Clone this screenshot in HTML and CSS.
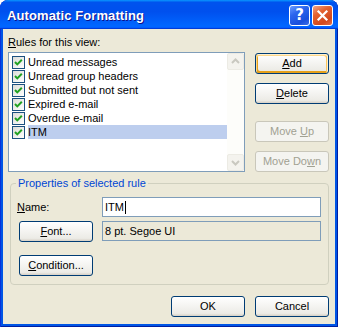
FILE: index.html
```html
<!DOCTYPE html>
<html>
<head>
<meta charset="utf-8">
<title>Automatic Formatting</title>
<link rel="stylesheet" href="styles.css">
</head>
<body>
<div class="window">
  <div class="titlebar">
    <span class="title">Automatic Formatting</span>
    <div class="tb-buttons">
      <span class="tb-btn help">?</span>
      <span class="tb-btn close"><svg width="19" height="19" viewBox="0 0 19 19"><path d="M5.5 5.5 L13.5 13.5 M13.5 5.5 L5.5 13.5" stroke="#fff" stroke-width="2.2" stroke-linecap="square"/></svg></span>
    </div>
  </div>
  <div class="client">
    <div class="label"><u>R</u>ules for this view:</div>
    <div class="rules-row">
      <div class="listbox">
        <ul class="items">
          <li><span class="cb"><svg width="11" height="11" viewBox="0 0 11 11"><path d="M2 5 L4.3 7.4 L8.8 2.8" stroke="#21A121" stroke-width="2" fill="none"/></svg></span><span class="txt">Unread messages</span></li>
          <li><span class="cb"><svg width="11" height="11" viewBox="0 0 11 11"><path d="M2 5 L4.3 7.4 L8.8 2.8" stroke="#21A121" stroke-width="2" fill="none"/></svg></span><span class="txt">Unread group headers</span></li>
          <li><span class="cb"><svg width="11" height="11" viewBox="0 0 11 11"><path d="M2 5 L4.3 7.4 L8.8 2.8" stroke="#21A121" stroke-width="2" fill="none"/></svg></span><span class="txt">Submitted but not sent</span></li>
          <li><span class="cb"><svg width="11" height="11" viewBox="0 0 11 11"><path d="M2 5 L4.3 7.4 L8.8 2.8" stroke="#21A121" stroke-width="2" fill="none"/></svg></span><span class="txt">Expired e-mail</span></li>
          <li><span class="cb"><svg width="11" height="11" viewBox="0 0 11 11"><path d="M2 5 L4.3 7.4 L8.8 2.8" stroke="#21A121" stroke-width="2" fill="none"/></svg></span><span class="txt">Overdue e-mail</span></li>
          <li class="sel"><span class="cb"><svg width="11" height="11" viewBox="0 0 11 11"><path d="M2 5 L4.3 7.4 L8.8 2.8" stroke="#21A121" stroke-width="2" fill="none"/></svg></span><span class="txt">ITM</span></li>
        </ul>
        <div class="scrollbar">
          <span class="sb-btn"><svg width="15" height="15" viewBox="0 0 15 15"><path d="M4 9 L7.5 5.5 L11 9" stroke="#C9C8C0" stroke-width="2" fill="none"/></svg></span>
          <span class="sb-track"></span>
          <span class="sb-btn"><svg width="15" height="15" viewBox="0 0 15 15"><path d="M4 6 L7.5 9.5 L11 6" stroke="#C9C8C0" stroke-width="2" fill="none"/></svg></span>
        </div>
      </div>
      <div class="side">
        <div class="side-group">
          <button class="btn default"><u>A</u>dd</button>
          <button class="btn"><u>D</u>elete</button>
        </div>
        <div class="side-group">
          <button class="btn disabled">Move <u>U</u>p</button>
          <button class="btn disabled">Move Do<u>w</u>n</button>
        </div>
      </div>
    </div>
    <fieldset class="group">
      <legend>Properties of selected rule</legend>
      <div class="prop-row name-row">
        <div class="prop-left"><u>N</u>ame:</div>
        <div class="field">ITM<span class="caret"></span></div>
      </div>
      <div class="prop-row font-row">
        <div class="prop-left"><button class="btn"><u>F</u>ont...</button></div>
        <div class="field readonly">8 pt. Segoe UI</div>
      </div>
      <div class="prop-row cond-row">
        <div class="prop-left"><button class="btn"><u>C</u>ondition...</button></div>
      </div>
    </fieldset>
    <div class="footer">
      <button class="btn">OK</button>
      <button class="btn">Cancel</button>
    </div>
  </div>
</div>
</body>
</html>
```

FILE: styles.css
```css
html, body {
  margin: 0;
  padding: 0;
  background: #fff;
}
body {
  font-family: "Liberation Sans", Arial, sans-serif;
  font-size: 11px;
  line-height: 13px;
  color: #000;
}
.window {
  width: 338px;
  height: 327px;
  box-sizing: border-box;
  display: flex;
  flex-direction: column;
  background: #0055E5;
  border-radius: 8px 8px 0 0;
  box-shadow: inset 1px 0 #0831D9, inset -1px 0 #001EA0, inset 0 -1px #001EA0;
  overflow: hidden;
}
.titlebar {
  height: 29px;
  flex: none;
  display: flex;
  align-items: center;
  justify-content: space-between;
  padding: 0 5px 0 7px;
  border-radius: 8px 8px 0 0;
  background: linear-gradient(180deg, #0997FF, #0053EE 8%, #0050EE 40%, #0066FF 88%, #0066FF 93%, #005BFF 95%, #003DD7 96%, #003DD7);
}
.title {
  color: #fff;
  font-weight: bold;
  font-size: 13px;
  letter-spacing: 0.1px;
  padding-top: 2px;
  text-shadow: 1px 1px #0F1089;
}
.tb-buttons {
  display: flex;
  gap: 2px;
  padding-top: 2px;
}
.tb-btn {
  box-sizing: border-box;
  width: 21px;
  height: 21px;
  border: 1px solid #fff;
  border-radius: 3px;
  display: flex;
  align-items: center;
  justify-content: center;
}
.help {
  background: linear-gradient(150deg, #6B9CFF 0%, #2B66EE 35%, #1A4FDC 75%, #3E6FE8 100%);
  color: #fff;
  font-family: "DejaVu Sans", sans-serif;
  font-weight: bold;
  font-size: 15px;
}
.close {
  background: linear-gradient(150deg, #F2A488 0%, #E3612F 35%, #D1481E 75%, #E0704A 100%);
}
.client {
  flex: 1;
  margin: 0 3px 3px 3px;
  background: #ECE9D8;
  padding: 0 6px 0 5px;
}
.label {
  margin-top: 7px;
  height: 13px;
}
.rules-row {
  display: flex;
  margin-top: 3px;
  gap: 10px;
}
.listbox {
  width: 237px;
  height: 120px;
  box-sizing: border-box;
  border: 1px solid #7F9DB9;
  background: #fff;
  display: flex;
}
.items {
  list-style: none;
  margin: 0;
  padding: 2px 0 0 3px;
  flex: 1;
}
.items li {
  display: flex;
  align-items: center;
  height: 14px;
}
.cb {
  box-sizing: border-box;
  width: 13px;
  height: 13px;
  border: 1px solid #1C5180;
  background: linear-gradient(135deg, #DCDCD7, #FFFFFF);
  display: flex;
  margin-right: 3px;
}
.txt {
  flex: 1;
  height: 14px;
  line-height: 14px;
  padding-left: 0;
}
.sel .txt {
  background: #BDCEEE;
}
.scrollbar {
  width: 17px;
  display: flex;
  flex-direction: column;
  background: #FDFDFA;
}
.sb-btn {
  box-sizing: border-box;
  width: 17px;
  height: 17px;
  border: 1px solid #ECEBE4;
  border-radius: 2px;
  background: #F4F3EE;
  display: flex;
  align-items: center;
  justify-content: center;
}
.sb-track {
  flex: 1;
}
.side {
  width: 74px;
  display: flex;
  flex-direction: column;
  justify-content: space-between;
}
.side-group {
  display: flex;
  flex-direction: column;
  gap: 9px;
}
.side-group:first-child {
  margin-top: 1px;
}
.btn {
  box-sizing: border-box;
  width: 74px;
  height: 21px;
  padding: 0;
  margin: 0;
  border: 1px solid #003C74;
  border-radius: 3px;
  background: linear-gradient(180deg, #FFFFFF, #ECEBE6 86%, #D6D0C5);
  font: inherit;
  color: #000;
  text-align: center;
}
.btn.default {
  box-shadow: inset -1px 1px #FFF0CF, inset 1px 2px #FDD889, inset -2px 2px #FBC761, inset 2px -2px #E5A01A;
}
.btn.disabled {
  background: #F4F4F0;
  border-color: #C9C7BA;
  color: #A1A192;
}
.group {
  margin: 5px 0 0 2px;
  padding: 0 7px 8px 6px;
  border: 1px solid #D0D0BF;
  border-radius: 4px;
}
.group legend {
  color: #0046D5;
  padding: 0 2px;
  margin-left: -1px;
  line-height: 13px;
}
.prop-row {
  display: flex;
  align-items: center;
}
.name-row {
  margin-top: 7px;
}
.font-row {
  margin-top: 4px;
  align-items: flex-start;
}
.cond-row {
  margin-top: 13px;
}
.prop-left {
  width: 85px;
  flex: none;
}
.prop-left .btn {
  margin-left: 2px;
}
.field {
  box-sizing: border-box;
  width: 219px;
  height: 20px;
  border: 1px solid #7F9DB9;
  background: #fff;
  padding-left: 2px;
  line-height: 18px;
  display: flex;
  align-items: center;
}
.field.readonly {
  background: #ECE9D8;
}
.caret {
  display: inline-block;
  width: 1px;
  height: 13px;
  background: #000;
  margin-left: 1px;
}
.footer {
  display: flex;
  justify-content: flex-end;
  gap: 10px;
  margin-top: 11px;
}
```
